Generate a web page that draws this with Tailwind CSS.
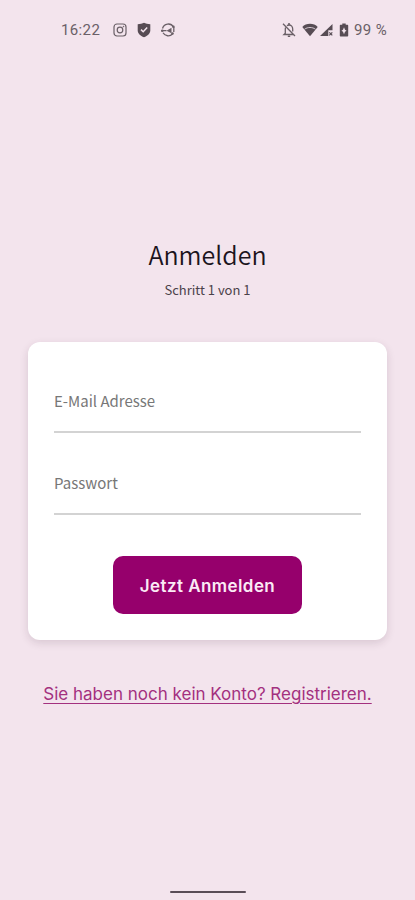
<!DOCTYPE html>
<html lang="de">
<head>
<meta charset="utf-8">
<meta name="viewport" content="width=device-width, initial-scale=1">
<title>Anmelden</title>
<script src="https://cdn.jsdelivr.net/npm/@tailwindcss/browser@4"></script>
</head>
<body class="flex min-h-screen flex-col bg-[#f3e4ed] font-['Noto_Sans_CJK_SC','Noto_Sans',sans-serif] text-[#1c141d]">
  <header class="flex h-15 items-center justify-between pr-7 pl-[61px] font-[Roboto,sans-serif] text-[15px] tracking-wide text-[#6a6067]">
    <div class="flex items-center gap-3">
      <time>16:22</time>
      <div class="flex items-center gap-2">
        <svg class="size-4" viewBox="0 0 16 16" fill="none" stroke="currentColor" stroke-width="1.200" aria-hidden="true"><rect x="2" y="2" width="12" height="12" rx="3"/><circle cx="8" cy="8" r="2.800"/><circle cx="11.500" cy="4.500" r=".5" fill="currentColor" stroke-width=".5"/></svg>
        <svg class="size-4" viewBox="0 0 16 16" aria-hidden="true"><path fill="#574c54" d="M1.700 2.200C4 2.200 6.500 1.700 8 .8c1.500.9 4 1.400 6.300 1.400V8.500c0 3-2.600 5.300-6.300 6.700C4.300 13.800 1.700 11.500 1.700 8.500z"/><path d="m5 7.600 2.200 2.200 4-4.200" fill="none" stroke="#f3e4ed" stroke-width="1.500"/></svg>
        <svg class="size-4" viewBox="0 0 16 16" fill="none" stroke="currentColor" stroke-width="1.300" aria-hidden="true"><path d="M2.500 6.500a6 6 0 0 1 11-1.500M12.500 12a6 6 0 0 1-9.500-1.200M1.200 8.700h5.300M13.800 5v5"/><circle cx="13.400" cy="4.800" r="1.300" fill="currentColor" stroke="none"/><path d="M11.500 5.800 6.500 8.700l5 2.500z" fill="currentColor" stroke="none"/><circle cx="2.300" cy="8.700" r="1.300" fill="currentColor" stroke="none"/><circle cx="12.500" cy="11.500" r="1.300" fill="currentColor" stroke="none"/></svg>
      </div>
    </div>
    <div class="flex items-center">
      <svg class="mr-[5px] size-4" viewBox="0 0 16 16" fill="none" stroke="currentColor" stroke-width="1.300" aria-hidden="true"><path d="M2 1.800 14 14M6 3.700C6.500 3.300 7.200 3 8 3c2.200 0 3.700 1.800 3.700 4v2.500M4.500 5.500 4.300 7v4.300L3 12.500h9.500"/><path d="M8 1v2M6.800 14.200h2.400" stroke-width="1.600"/></svg>
      <svg class="size-4" viewBox="0 0 16 16" aria-hidden="true"><path fill="#574c54" d="M8 14.300.3 5C3.800.8 12.200.8 15.700 5z"/><path d="M2.600 7.200C5.600 4.900 10.400 4.900 13.400 7.200" fill="none" stroke="#f3e4ed" stroke-width=".8"/></svg>
      <svg class="size-4" viewBox="0 0 16 16" aria-hidden="true"><path fill="#574c54" d="M14.500 2v6.300h-4.200V14H2z"/><path d="m11.300 10.300 3 3m0-3-3 3" stroke="#574c54" stroke-width="1.200"/></svg>
      <svg class="mx-[2px] size-4" viewBox="0 0 16 16" aria-hidden="true"><path fill="#574c54" d="M6.300 1.500h3.400v1.300h1.500c.6 0 1 .4 1 1v9.700c0 .6-.4 1-1 1H4.800c-.6 0-1-.4-1-1V3.800c0-.6.4-1 1-1h1.500z"/><path fill="#f3e4ed" d="M8 5.300 9 7.800l1.500 1L9 9.800l-1 2.500-1-2.500-1.500-1L7 7.800z"/></svg>
      <span>99 %</span>
    </div>
  </header>

  <main class="flex flex-1 flex-col items-center px-7 pt-[174px]">
    <h1 class="text-[25px] leading-10 font-[350]">Anmelden</h1>
    <p class="mt-1 text-[13px] leading-6 text-[#4b424a]">Schritt 1 von 1</p>

    <form class="mt-10 flex w-full flex-col rounded-xl bg-white px-[26px] pt-[41px] pb-[26px] shadow-[0_3px_8px_rgba(60,30,50,0.14)]">
      <div class="relative">
        <input id="email" type="email" placeholder=" " class="peer h-[50px] w-full border-b-2 border-[#d3d3d3] pb-3 text-[15px] outline-none">
        <label for="email" class="absolute top-1.5 left-0 text-[15px] leading-6 text-[#777777] peer-focus:-top-4 peer-focus:text-xs peer-[:not(:placeholder-shown)]:-top-4">E-Mail Adresse</label>
      </div>
      <div class="relative mt-8">
        <input id="password" type="password" placeholder=" " class="peer h-[50px] w-full border-b-2 border-[#d3d3d3] pb-3 text-[15px] outline-none">
        <label for="password" class="absolute top-1.5 left-0 text-[15px] leading-6 text-[#777777] peer-focus:-top-4 peer-focus:text-xs peer-[:not(:placeholder-shown)]:-top-4">Passwort</label>
      </div>
      <button type="submit" class="mt-[41px] self-center rounded-[10px] bg-[#96006c] px-[27px] pt-[18px] pb-4 font-[Inter,sans-serif] text-[17px] leading-6 font-semibold tracking-wide text-[#fbeaf5]">Jetzt Anmelden</button>
    </form>

    <a href="#" class="mt-10 font-[Inter,sans-serif] text-[17px] leading-7 whitespace-nowrap text-[#a3307f] underline underline-offset-3">Sie haben noch kein Konto? Registrieren.</a>
  </main>

  <footer class="flex justify-center pb-[7px]">
    <div class="h-[2px] w-19 rounded-full bg-[#5a4d57]"></div>
  </footer>
</body>
</html>
